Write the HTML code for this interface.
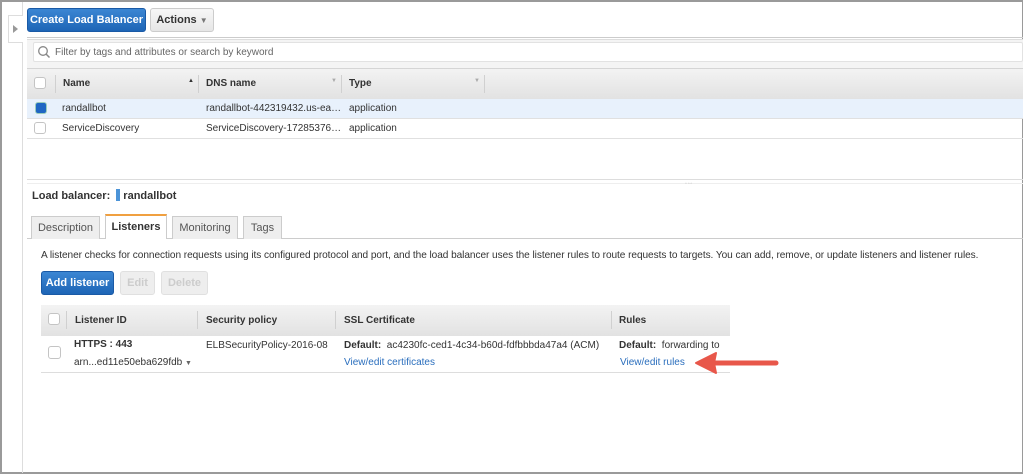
<!DOCTYPE html><html><head><style>
*{margin:0;padding:0;box-sizing:border-box}
body{width:1024px;height:476px;background:#fff;font-family:"Liberation Sans",sans-serif;font-size:10px;color:#333;position:relative;overflow:hidden}
.a{position:absolute}
.b{font-weight:bold}
.btn{position:absolute;border-radius:3px;font-weight:bold;font-size:11px;text-align:center}
.blue{background:linear-gradient(#3b86d3,#1e65b6);color:#fff;border:1px solid #1a5aa6}
.cb{position:absolute;width:12px;height:12px;border:1px solid #c4c4c4;border-radius:3px;background:#fff}
.th{background:linear-gradient(#f3f3f3,#e2e2e2)}
.dv{position:absolute;width:1px;background:#d0d0d0}
.lnk{color:#2a6ebd}
</style></head><body>
<div class="a" style="left:0;top:0;width:1023px;height:474px;border:2px solid #9a9a9a;border-right-width:1px"></div>
<div class="a" style="left:22px;top:2px;width:1px;height:471px;background:#ddd"></div>
<div class="a" style="left:8px;top:15px;width:15px;height:28px;border:1px solid #ddd;border-right:none;background:#fff"></div>
<div class="a" style="left:13px;top:25px;border-left:5px solid #999;border-top:4px solid transparent;border-bottom:4px solid transparent"></div>
<div class="btn blue" style="left:27px;top:8px;width:119px;height:24px;line-height:22px">Create Load Balancer</div>
<div class="btn" style="left:150px;top:8px;width:64px;height:24px;line-height:22px;background:linear-gradient(#f7f7f7,#e6e6e6);border:1px solid #ccc;color:#333">Actions <span style="font-size:8px;color:#777">▼</span></div>
<div class="a" style="left:27px;top:37px;width:996px;height:3px;border-top:1px solid #ccc;border-bottom:1px solid #ddd"></div>
<div class="a" style="left:27px;top:40px;width:996px;height:28px;background:#f4f4f4"></div>
<div class="a" style="left:33px;top:42px;width:990px;height:20px;background:#fff;border:1px solid #e2e2e2;border-radius:2px"></div>
<svg class="a" style="left:37px;top:45px" width="14" height="14"><circle cx="6" cy="6" r="4.3" fill="none" stroke="#888" stroke-width="1.3"/><line x1="9" y1="9" x2="12.5" y2="12.5" stroke="#888" stroke-width="1.5"/></svg>
<div class="a" style="left:55px;top:47px;color:#666">Filter by tags and attributes or search by keyword</div>
<div class="a th" style="left:27px;top:68px;width:996px;height:31px;border-top:1px solid #d5d5d5"></div>
<div class="cb" style="left:34px;top:77px"></div>
<div class="dv" style="left:55px;top:75px;height:18px"></div>
<div class="a b" style="left:63px;top:78px">Name</div><div class="a" style="left:188px;top:78px;font-size:6px">▲</div>
<div class="dv" style="left:198px;top:75px;height:18px"></div>
<div class="a b" style="left:206px;top:78px">DNS name</div><div class="a" style="left:331px;top:78px;font-size:6px;color:#aaa">▼</div>
<div class="dv" style="left:341px;top:75px;height:18px"></div>
<div class="a b" style="left:349px;top:78px">Type</div><div class="a" style="left:474px;top:78px;font-size:6px;color:#aaa">▼</div>
<div class="dv" style="left:484px;top:75px;height:18px"></div>
<div class="a" style="left:27px;top:99px;width:996px;height:20px;background:#e8f1fc;border-bottom:1px solid #e0e0e0"></div>
<div class="a" style="left:35px;top:102px;width:12px;height:12px;border-radius:3px;background:#1f66c3;border:1px solid #9cb"></div>
<div class="a" style="left:62px;top:103px">randallbot</div><div class="a" style="left:206px;top:103px">randallbot-442319432.us-ea…</div><div class="a" style="left:349px;top:103px">application</div>
<div class="a" style="left:27px;top:119px;width:996px;height:20px;border-bottom:1px solid #e0e0e0"></div>
<div class="cb" style="left:34px;top:122px"></div>
<div class="a" style="left:62px;top:123px">ServiceDiscovery</div><div class="a" style="left:206px;top:123px">ServiceDiscovery-17285376…</div><div class="a" style="left:349px;top:123px">application</div>
<div class="a" style="left:27px;top:179px;width:996px;height:5px;border-top:1px solid #ddd;border-bottom:1px solid #eee"></div>
<div class="a" style="left:685px;top:181px;font-size:5px;color:#bbb;letter-spacing:1px">▫▫▫</div>
<div class="a b" style="left:32px;top:189px;font-size:11px">Load balancer: <span style="display:inline-block;width:4px;height:12px;background:#4c94d8;vertical-align:-2px;margin:0 3px"></span>randallbot</div>
<div class="a" style="left:27px;top:238px;width:996px;height:1px;background:#ccc"></div>
<div class="a" style="left:31px;top:216px;width:69px;height:23px;background:#eee;border:1px solid #ccc;border-bottom:none;text-align:center;line-height:22px;font-size:11px;color:#555">Description</div>
<div class="a b" style="left:105px;top:214px;width:62px;height:25px;background:#fff;border:1px solid #ccc;border-top:2px solid #f0a040;border-bottom:none;text-align:center;line-height:22px;font-size:11px">Listeners</div>
<div class="a" style="left:172px;top:216px;width:66px;height:23px;background:#eee;border:1px solid #ccc;border-bottom:none;text-align:center;line-height:22px;font-size:11px;color:#555">Monitoring</div>
<div class="a" style="left:243px;top:216px;width:39px;height:23px;background:#eee;border:1px solid #ccc;border-bottom:none;text-align:center;line-height:22px;font-size:11px;color:#555">Tags</div>
<div class="a" style="left:41px;top:250px;font-size:10.1px;letter-spacing:-0.06px;white-space:nowrap">A listener checks for connection requests using its configured protocol and port, and the load balancer uses the listener rules to route requests to targets. You can add, remove, or update listeners and listener rules.</div>
<div class="btn blue" style="left:41px;top:271px;width:73px;height:24px;line-height:22px">Add listener</div>
<div class="btn" style="left:120px;top:271px;width:35px;height:24px;line-height:22px;background:#eee;border:1px solid #e0e0e0;color:#ccc">Edit</div>
<div class="btn" style="left:161px;top:271px;width:47px;height:24px;line-height:22px;background:#eee;border:1px solid #e0e0e0;color:#ccc">Delete</div>
<div class="a th" style="left:41px;top:305px;width:689px;height:31px"></div>
<div class="cb" style="left:48px;top:313px"></div>
<div class="dv" style="left:66px;top:311px;height:18px"></div>
<div class="a b" style="left:75px;top:315px">Listener ID</div>
<div class="dv" style="left:197px;top:311px;height:18px"></div>
<div class="a b" style="left:206px;top:315px">Security policy</div>
<div class="dv" style="left:335px;top:311px;height:18px"></div>
<div class="a b" style="left:344px;top:315px">SSL Certificate</div>
<div class="dv" style="left:611px;top:311px;height:18px"></div>
<div class="a b" style="left:619px;top:315px">Rules</div>
<div class="cb" style="left:48px;top:346px;width:13px;height:13px"></div>
<div class="a b" style="left:74px;top:339px">HTTPS : 443</div>
<div class="a" style="left:74px;top:357px">arn...ed11e50eba629fdb <span style="font-size:7px;color:#666">▼</span></div>
<div class="a" style="left:206px;top:340px">ELBSecurityPolicy-2016-08</div>
<div class="a" style="left:344px;top:340px"><b>Default:</b>&nbsp; ac4230fc-ced1-4c34-b60d-fdfbbbda47a4 (ACM)</div>
<div class="a lnk" style="left:344px;top:357px">View/edit certificates</div>
<div class="a" style="left:619px;top:340px"><b>Default:</b>&nbsp; forwarding to</div>
<div class="a lnk" style="left:620px;top:357px">View/edit rules</div>
<div class="a" style="left:41px;top:372px;width:689px;height:1px;background:#ddd"></div>
<svg class="a" style="left:690px;top:350px" width="95" height="26"><line x1="20" y1="13" x2="86" y2="13" stroke="#e8574a" stroke-width="5" stroke-linecap="round"/><path d="M6 13 L26 3 L24 13 L26 23 Z" fill="#e8574a" stroke="#e8574a" stroke-linejoin="round" stroke-width="2"/></svg>
</body></html>
